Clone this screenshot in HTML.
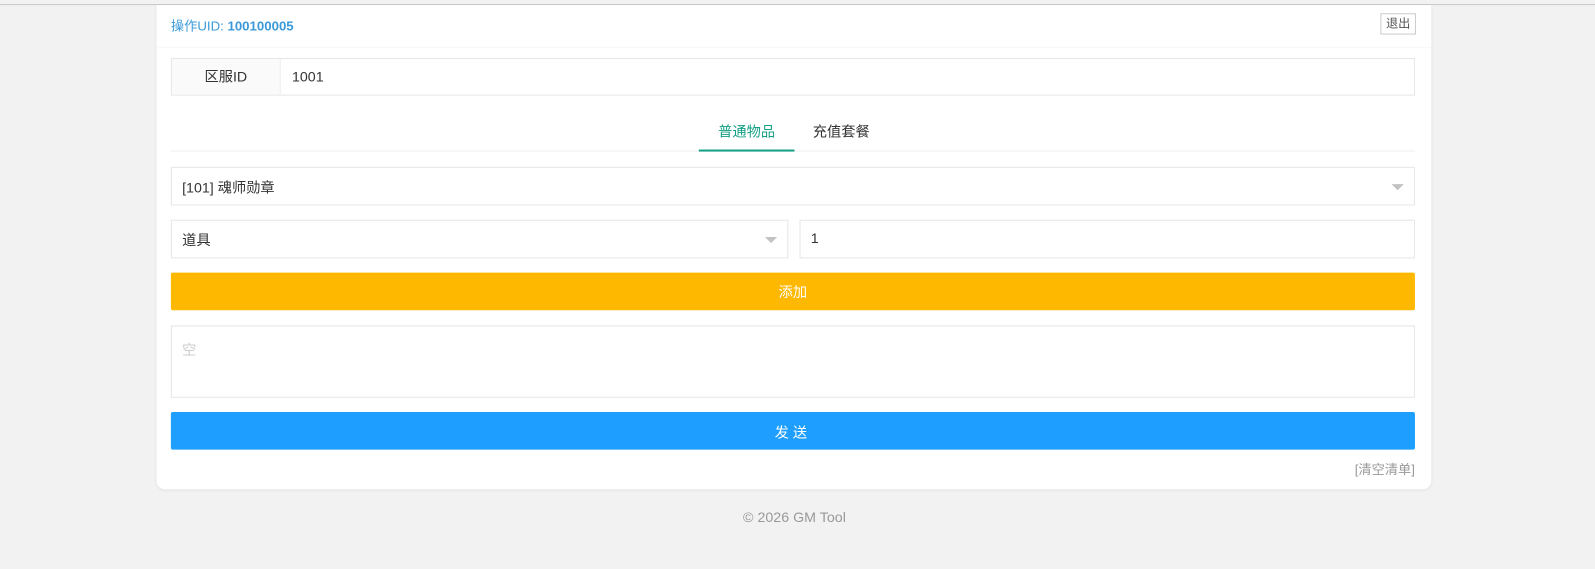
<!DOCTYPE html>
<html><head><meta charset="utf-8"><style>
*{box-sizing:border-box;margin:0;padding:0}
body{width:1595px;height:568px;background:#f2f2f2;font-family:"Liberation Sans","Noto Sans CJK SC",sans-serif;font-size:14px;color:#333;position:relative;overflow:hidden}
#w{position:absolute;left:0;top:0;width:1568px;height:559px;transform:scale(1.01722);transform-origin:0 0}
.topline{position:absolute;left:0;top:4px;width:1568px;height:1px;background:#c8c8c8}
.card{position:absolute;left:154px;top:5px;width:1253px;height:476px;background:#fff;border-radius:0 0 8px 8px;box-shadow:0 1px 3px rgba(0,0,0,.06)}
.a{position:absolute}
.hdr{left:0;top:0;width:1253px;height:42px;border-bottom:1px solid #f6f6f6}
.uid{left:14px;top:10px;font-size:13px;color:#3a9ad9}
.uid b{font-weight:bold}
.out{left:1203px;top:8px;width:35px;height:21px;border:1px solid #ccc;font-size:12px;color:#555;text-align:center;line-height:19px}
.box{border:1px solid #e6e6e6;height:38px;background:#fff}
.tri{position:absolute;right:10px;top:16px;border:6px solid transparent;border-top:6px solid #c2c2c2;border-bottom:none}
.txt{position:absolute;left:10px;top:9px}
.btn{height:37px;color:#fff;text-align:center;line-height:39px;border-radius:2px}
</style></head><body>
<div id="w">
<div class="topline"></div>
<div class="card">
<div class="a hdr"></div>
<div class="a uid">操作UID: <b>100100005</b></div>
<div class="a out">退出</div>
<div class="a box" style="left:14px;top:52px;width:1223px;height:37px">
 <div class="a" style="left:0;top:0;width:107px;height:35px;background:#fafafa;border-right:1px solid #eee;text-align:center;line-height:35px">区服ID</div>
 <div class="a" style="left:118px;top:9px">1001</div>
</div>
<div class="a" style="left:14px;top:143px;width:1223px;height:1px;background:#eee"></div>
<div class="a" style="left:552px;top:114px;color:#16a085">普通物品</div>
<div class="a" style="left:645px;top:114px;color:#333">充值套餐</div>
<div class="a" style="left:533px;top:142px;width:94px;height:2px;background:#16a085"></div>
<div class="a box" style="left:14px;top:159px;width:1223px;height:38px"><span class="txt">[101] 魂师勋章</span><i class="tri"></i></div>
<div class="a box" style="left:14px;top:211px;width:607px;height:38px"><span class="txt">道具</span><i class="tri"></i></div>
<div class="a box" style="left:632px;top:211px;width:605px;height:38px"><span class="txt">1</span></div>
<div class="a btn" style="left:14px;top:263px;width:1223px;background:#ffb800">添加</div>
<div class="a box" style="left:14px;top:315px;width:1223px;height:71px"><span class="txt" style="top:13px;color:#ccc">空</span></div>
<div class="a btn" style="left:14px;top:400px;width:1223px;background:#1e9fff;letter-spacing:4px;line-height:41px">发送</div>
<div class="a" style="right:16px;top:446px;color:#999;font-size:13px">[清空清单]</div>
</div>
<div class="a" style="left:0;width:1562px;top:500px;text-align:center;color:#999;font-size:14px">© 2026 GM Tool</div>
</div>
</body></html>
